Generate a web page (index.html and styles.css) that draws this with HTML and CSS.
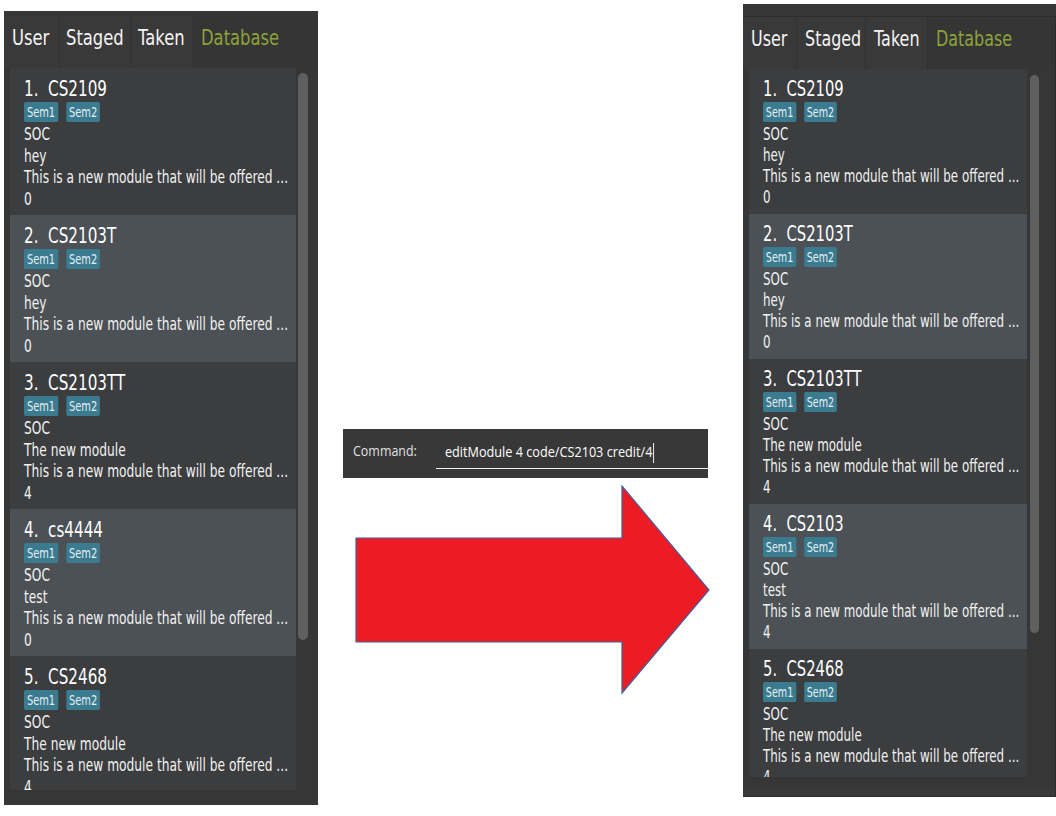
FILE: index.html
```html
<!DOCTYPE html>
<html>
<head>
<meta charset="utf-8">
<link rel="stylesheet" href="styles.css">
</head>
<body>
<div class="stage">
  <section class="panel panel-left">
    <div class="tabs">
      <span class="tab tab-box tab-user"><span class="tab-text">User</span></span>
      <span class="tab tab-box tab-staged"><span class="tab-text">Staged</span></span>
      <span class="tab tab-box tab-taken"><span class="tab-text">Taken</span></span>
      <span class="tab tab-active"><span class="tab-text">Database</span></span>
    </div>
    <div class="list-wrap">
      <div class="list">
        <div class="card">
          <div class="title">1.&nbsp; CS2109</div>
          <div class="tags"><span class="tag">Sem1</span><span class="tag">Sem2</span></div>
          <div class="line">SOC</div>
          <div class="line">hey</div>
          <div class="line">This is a new module that will be offered ...</div>
          <div class="line">0</div>
        </div>
        <div class="card card-alt">
          <div class="title">2.&nbsp; CS2103T</div>
          <div class="tags"><span class="tag">Sem1</span><span class="tag">Sem2</span></div>
          <div class="line">SOC</div>
          <div class="line">hey</div>
          <div class="line">This is a new module that will be offered ...</div>
          <div class="line">0</div>
        </div>
        <div class="card">
          <div class="title">3.&nbsp; CS2103TT</div>
          <div class="tags"><span class="tag">Sem1</span><span class="tag">Sem2</span></div>
          <div class="line">SOC</div>
          <div class="line">The new module</div>
          <div class="line">This is a new module that will be offered ...</div>
          <div class="line">4</div>
        </div>
        <div class="card card-alt">
          <div class="title">4.&nbsp; cs4444</div>
          <div class="tags"><span class="tag">Sem1</span><span class="tag">Sem2</span></div>
          <div class="line">SOC</div>
          <div class="line">test</div>
          <div class="line">This is a new module that will be offered ...</div>
          <div class="line">0</div>
        </div>
        <div class="card">
          <div class="title">5.&nbsp; CS2468</div>
          <div class="tags"><span class="tag">Sem1</span><span class="tag">Sem2</span></div>
          <div class="line">SOC</div>
          <div class="line">The new module</div>
          <div class="line">This is a new module that will be offered ...</div>
          <div class="line">4</div>
        </div>
      </div>
      <div class="scroll"><div class="thumb"></div></div>
    </div>
  </section>

  <div class="middle">
    <div class="command">
      <span class="cmd-label">Command:</span>
      <div class="cmd-input"><span class="cmd-text">editModule 4 code/CS2103 credit/4<span class="caret"></span></span></div>
    </div>
    <svg class="arrow" width="356" height="210" viewBox="0 0 356 210">
      <polygon points="1,53 267,53 267,1 354,105 267,208 267,157 1,157" fill="#ed1c24" stroke="#3f5e9e" stroke-width="1.2"/>
    </svg>
  </div>

  <section class="panel panel-right">
    <div class="tabs">
      <span class="tab tab-box tab-user"><span class="tab-text">User</span></span>
      <span class="tab tab-box tab-staged"><span class="tab-text">Staged</span></span>
      <span class="tab tab-box tab-taken"><span class="tab-text">Taken</span></span>
      <span class="tab tab-active"><span class="tab-text">Database</span></span>
    </div>
    <div class="list-wrap">
      <div class="list">
        <div class="card">
          <div class="title">1.&nbsp; CS2109</div>
          <div class="tags"><span class="tag">Sem1</span><span class="tag">Sem2</span></div>
          <div class="line">SOC</div>
          <div class="line">hey</div>
          <div class="line">This is a new module that will be offered ...</div>
          <div class="line">0</div>
        </div>
        <div class="card card-alt">
          <div class="title">2.&nbsp; CS2103T</div>
          <div class="tags"><span class="tag">Sem1</span><span class="tag">Sem2</span></div>
          <div class="line">SOC</div>
          <div class="line">hey</div>
          <div class="line">This is a new module that will be offered ...</div>
          <div class="line">0</div>
        </div>
        <div class="card">
          <div class="title">3.&nbsp; CS2103TT</div>
          <div class="tags"><span class="tag">Sem1</span><span class="tag">Sem2</span></div>
          <div class="line">SOC</div>
          <div class="line">The new module</div>
          <div class="line">This is a new module that will be offered ...</div>
          <div class="line">4</div>
        </div>
        <div class="card card-alt">
          <div class="title">4.&nbsp; CS2103</div>
          <div class="tags"><span class="tag">Sem1</span><span class="tag">Sem2</span></div>
          <div class="line">SOC</div>
          <div class="line">test</div>
          <div class="line">This is a new module that will be offered ...</div>
          <div class="line">4</div>
        </div>
        <div class="card">
          <div class="title">5.&nbsp; CS2468</div>
          <div class="tags"><span class="tag">Sem1</span><span class="tag">Sem2</span></div>
          <div class="line">SOC</div>
          <div class="line">The new module</div>
          <div class="line">This is a new module that will be offered ...</div>
          <div class="line">4</div>
        </div>
      </div>
      <div class="scroll"><div class="thumb"></div></div>
    </div>
    <div class="panel-foot"></div>
  </section>
</div>
</body>
</html>
```

FILE: styles.css
```css
* { box-sizing: border-box; }
html, body { margin: 0; padding: 0; background: #ffffff; }
body {
  width: 1056px;
  height: 816px;
  overflow: hidden;
  font-family: "DejaVu Sans", sans-serif;
}
.stage {
  display: flex;
  align-items: flex-start;
}

/* panels */
.panel {
  background: #363636;
  display: flex;
  flex-direction: column;
  overflow: hidden;
  flex: none;
}
.panel-left {
  margin-left: 4px;
  margin-top: 11px;
  width: 314px;
  height: 794px;
  padding-top: 4px;
  padding-bottom: 15px;
}
.panel-right {
  margin-left: 32px;
  margin-top: 4px;
  width: 313px;
  height: 793px;
  padding-top: 12px;
}
.panel-foot {
  flex: none;
  height: 20px;
  border-right: 1px solid #2c2c2c;
  border-bottom: 1px solid #2c2c2c;
  margin-bottom: 0;
  box-shadow: inset 0 -7px 0 #3a3a3a;
}

/* tabs */
.tabs {
  display: flex;
  align-items: stretch;
  height: 53px;
  background: #353535;
  padding-top: 1px;
  flex: none;
}
.panel-right .tabs {
  border-top: 1px solid #2c2c2c;
  border-right: 1px solid #2c2c2c;
  padding-top: 0;
}
.tab {
  display: flex;
  align-items: center;
  font-size: 21px;
  color: #f4f4f4;
  padding: 0 0 9px 8px;
  white-space: nowrap;
  flex: none;
}
.tab-text {
  display: inline-block;
  transform: scaleX(0.78);
  transform-origin: left center;
}
.tab-box {
  background: #393939;
  border-right: 1px solid #313131;
}
.tab-user { width: 56px; }
.tab-staged { width: 71px; padding-left: 6px; }
.tab-taken { width: 63px; padding-left: 7px; }
.tab-active { color: #8ea33a; padding-left: 7px; }
.panel-right .tab-text { transform: scaleX(0.76); }
.panel-right .tab-user { width: 54px; padding-left: 8px; }
.panel-right .tab-staged { width: 69px; padding-left: 8px; }
.panel-right .tab-taken { width: 62px; padding-left: 8px; }
.panel-right .tab-active { padding-left: 8px; }

/* list */
.list-wrap {
  flex: 1;
  display: flex;
  min-height: 0;
  padding-left: 6px;
}
.panel-right .list-wrap {
  border-right: 1px solid #2c2c2c;
}
.list {
  background: #3b3d3f;
  overflow: hidden;
  display: flex;
  flex-direction: column;
  flex: none;
}
.panel-left .list { width: 286px; }
.panel-right .list { width: 278px; }
.scroll {
  width: 14px;
  padding: 5px 2px 0 2px;
  flex: none;
}
.panel-left .scroll { height: 572px; }
.panel-right .scroll { height: 564px; padding-left: 3px; padding-top: 6px; }
.thumb {
  height: 100%;
  border-radius: 5px;
  background: #5f5f5f;
}

/* cards */
.card {
  flex: none;
  height: 147px;
  padding: 8px 0 6px 14px;
  color: #f2f2f2;
  background: #3b3d3f;
  overflow: hidden;
}
.card-alt { background: #4c5155; }
.title, .tags, .line {
  transform-origin: left center;
  white-space: nowrap;
}
.title {
  font-size: 20.5px;
  line-height: 26px;
  color: #ffffff;
  transform: scaleX(0.74);
}
.tags {
  display: flex;
  gap: 11px;
  height: 20px;
  margin-bottom: 1px;
  transform: scaleX(0.73);
}
.tag {
  background: #3a7b90;
  color: #e6eef2;
  font-size: 13.5px;
  line-height: 20px;
  height: 20px;
  padding: 0 4px;
  border-radius: 2px;
}
.line {
  font-size: 18px;
  line-height: 21.5px;
  transform: scaleX(0.68);
}
.panel-right .card {
  height: 145px;
  padding: 7px 0 7px 14px;
}
.panel-right .title { transform: scaleX(0.72); }
.panel-right .tags { transform: scaleX(0.71); }
.panel-right .line { line-height: 21px; transform: scaleX(0.66); }

/* middle */
.middle {
  margin-left: 25px;
  padding-top: 429px;
  width: 368px;
  display: flex;
  flex-direction: column;
  flex: none;
}
.command {
  width: 365px;
  height: 49px;
  background: #383838;
  display: flex;
  align-items: flex-start;
  padding: 12px 0 0 10px;
}
.cmd-label {
  font-family: "Open Sans", "DejaVu Sans", sans-serif;
  font-size: 14px;
  line-height: 20px;
  color: #e0e0e0;
  width: 83px;
  flex: none;
  white-space: nowrap;
  transform: scaleX(0.89);
  transform-origin: left center;
}
.cmd-input {
  flex: 1;
  height: 28px;
  border-bottom: 1px solid #f0f0f0;
  padding-left: 9px;
  display: flex;
  align-items: flex-start;
}
.cmd-text {
  display: inline-flex;
  align-items: flex-start;
  font-family: "Open Sans", "DejaVu Sans", sans-serif;
  font-size: 14px;
  line-height: 22px;
  color: #ffffff;
  white-space: nowrap;
  transform: scaleX(0.905);
  transform-origin: left center;
}
.caret {
  display: inline-block;
  width: 1.2px;
  height: 20px;
  margin-top: 2px;
  margin-left: 1px;
  background: #ffffff;
}
.arrow {
  display: block;
  margin-top: 7px;
  margin-left: 12px;
}
```
